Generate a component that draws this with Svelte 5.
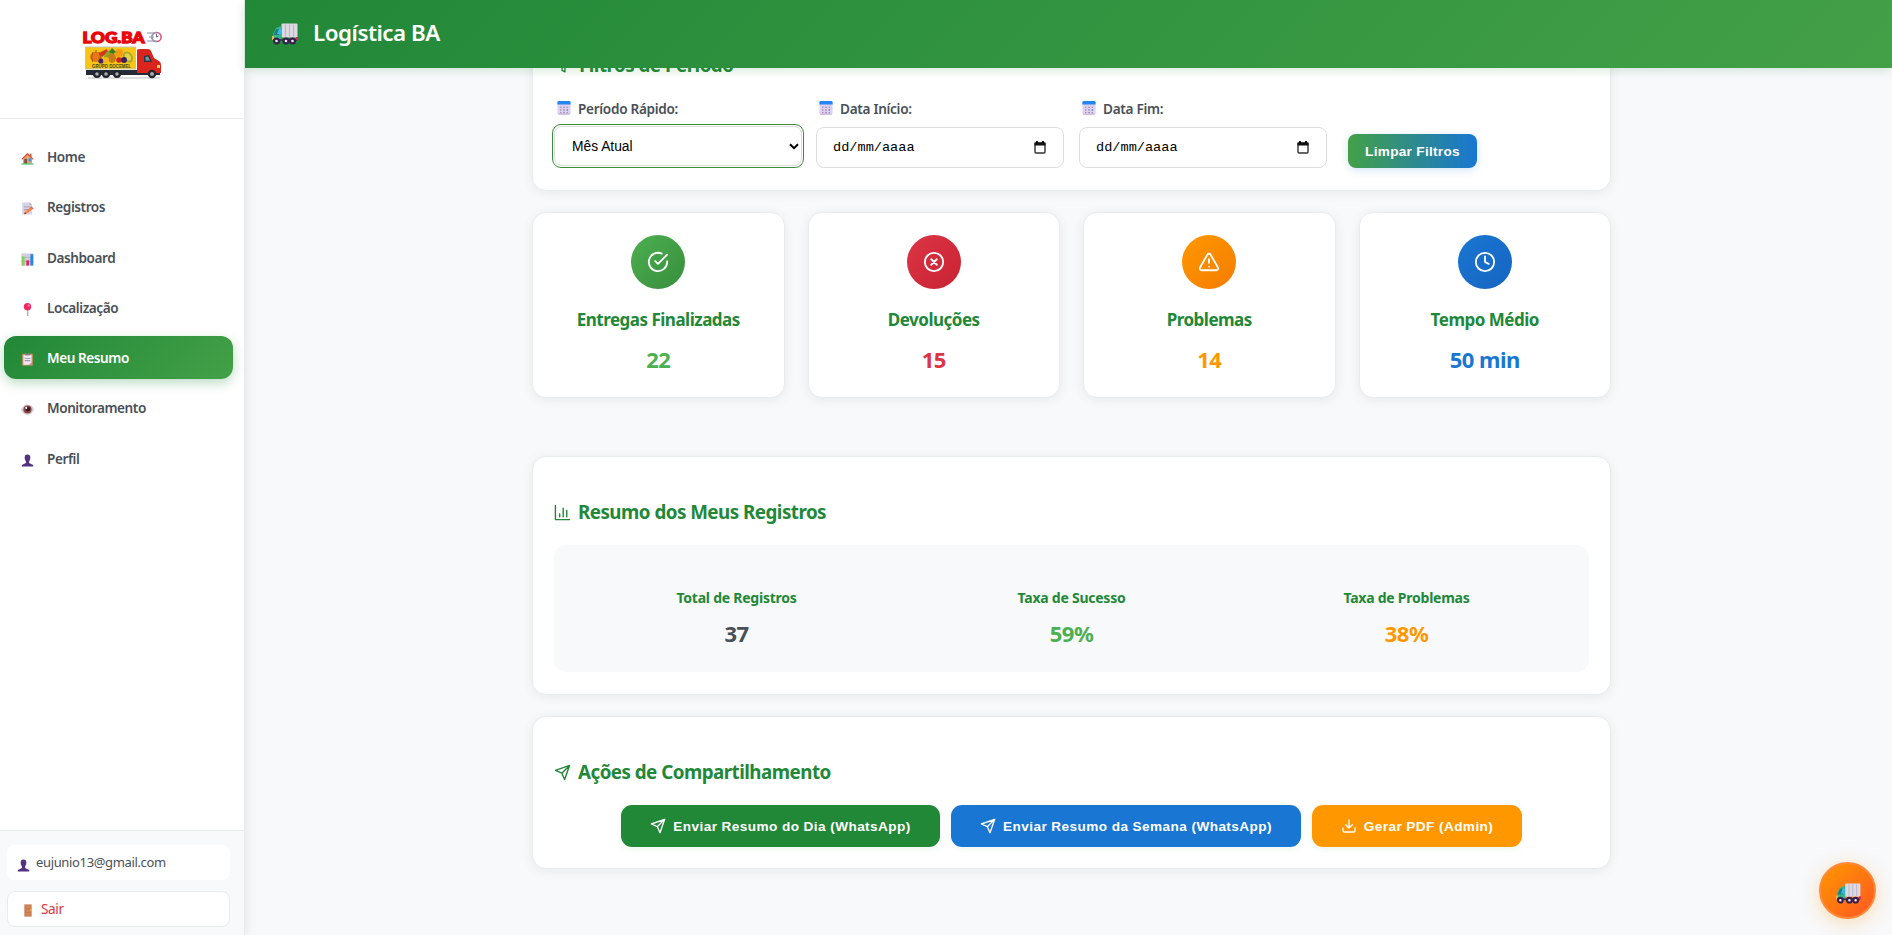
<script>
  const nav = [
    { icon: 'home', label: 'Home' },
    { icon: 'note', label: 'Registros' },
    { icon: 'chart', label: 'Dashboard' },
    { icon: 'pin', label: 'Localização' },
    { icon: 'clipboard', label: 'Meu Resumo', active: true },
    { icon: 'eye', label: 'Monitoramento' },
    { icon: 'user', label: 'Perfil' }
  ];
  const stats = [
    { kind: 'ok', title: 'Entregas Finalizadas', value: '22' },
    { kind: 'bad', title: 'Devoluções', value: '15' },
    { kind: 'warn', title: 'Problemas', value: '14' },
    { kind: 'time', title: 'Tempo Médio', value: '50 min' }
  ];
  const summary = [
    { title: 'Total de Registros', value: '37', kind: 'plain' },
    { title: 'Taxa de Sucesso', value: '59%', kind: 'ok' },
    { title: 'Taxa de Problemas', value: '38%', kind: 'warn' }
  ];
</script>

{#snippet emoji(name)}
  <svg class="emoji" viewBox="0 0 32 32" aria-hidden="true">
    {#if name === 'home'}
      <path d="M5 15 16 5l11 10v14H5z" fill="#e3a46f" />
      <path d="M22 4h4v8h-4z" fill="#b96c50" />
      <path d="M1 17 16 2l15 15-2 2L16 7 3 19z" fill="#dc5038" />
      <path d="M8 17h7v12H8z" fill="#81504e" />
      <path d="M19 16h6v7h-6z" fill="#219bf2" />
      <path d="M1 28h30v3H1z" fill="#3ec76b" />
    {:else if name === 'note'}
      <path d="M3 1h18l6 6v24H3z" fill="#d9d2e3" />
      <path d="m21 1 6 6h-6z" fill="#aaa0b8" />
      <path d="M7 11h16v2H7zm0 7h14v2H7z" fill="#968da5" />
      <path d="m9 25 14-12 5 5-13 10-6 2z" fill="#fb823f" />
      <path d="m23 13 3-2 5 5-3 2z" fill="#f8484d" />
      <path d="m9 25 4 3-5 2z" fill="#493b49" />
    {:else if name === 'chart'}
      <path d="M1 1h30v30H1z" fill="#d4cfdf" />
      <path d="M1 11h30M1 21h30" stroke="#a99fba" stroke-width="1.5" />
      <path d="M2 8h7v23H2z" fill="#87cf63" />
      <path d="M13 18h7v13h-7z" fill="#df256d" />
      <path d="M23 3h7v28h-7z" fill="#2489de" />
    {:else if name === 'pin'}
      <path d="M15 15h3v17h-3z" fill="#aaa2b3" />
      <circle cx="16" cy="9" r="9" fill="#ee2863" />
      <circle cx="19" cy="6" r="2.5" fill="#ff91b1" />
    {:else if name === 'clipboard'}
      <path d="M3 2h26v29H3z" fill="#dc8e5f" />
      <path d="M6 5h20v19l-6 5H6z" fill="#eee8f4" />
      <path d="M26 23v6h-6z" fill="#b99baa" />
      <path d="M10 1h12v5H10z" fill="#827a8c" />
      <path d="M9 12h14v2H9zm0 6h14v2H9z" fill="#8d8498" />
    {:else if name === 'eye'}
      <path d="M0 16Q8 3 18 4q11 1 14 12-6 13-16 13Q4 28 0 16" fill="#d3c9d6" />
      <circle cx="16" cy="16" r="10" fill="#8b4a3f" />
      <circle cx="17" cy="15" r="6" fill="#35152a" />
      <circle cx="13" cy="12" r="2.5" fill="#fff" />
    {:else if name === 'user'}
      <path d="M9 9q0-8 7-8t7 8q0 5-3 9v4l10 5v4H2v-4l10-5v-4Q9 14 9 9" fill="#533282" />
    {:else if name === 'door'}
      <path d="M7 1h18v30H7z" fill="#c77b50" />
      <path d="M10 4h12v6H10zm0 9h12v6H10zm0 9h12v6H10z" fill="#d18859" />
      <circle cx="23" cy="15" r="2" fill="#ffc14c" />
    {:else if name === 'calendar'}
      <rect x="1" y="3" width="30" height="28" rx="3" fill="#ded0ee" />
      <path d="M1 8V3q0-3 3-3h24q3 0 3 3v5z" fill="#2485f4" />
      <path d="M3 29h26v2H3z" fill="#bea5d8" />
      <g fill="#a294b2">
        <path d="M7 13h3v3H7zm7 0h4v3h-4zm8 0h3v3h-3zM7 19h3v3H7zm7 0h4v3h-4zM7 25h3v3H7zm7 0h4v3h-4zm8 0h3v3h-3z" />
      </g>
      <path d="M22 19h3v3h-3z" fill="#318be5" />
    {/if}
  </svg>
{/snippet}

{#snippet truck()}
  <svg class="truck" viewBox="0 0 27 22" aria-hidden="true">
    <rect x="10.5" y=".5" width="16" height="14" rx="1" fill="#ddd9e3" />
    <path d="M14.5 1.5v12m4-12v12m4-12v12" stroke="#bbb4c5" />
    <path d="m10 3-5 2-3 6v6h8.500V3z" fill="#35b68b" />
    <path d="M5 6h3v6H2.500z" fill="#237b86" />
    <path d="M8 6h2v5H6z" fill="#31bdee" />
    <path d="M1 13h2v4H1z" fill="#f5b544" />
    <path d="M2 16h24v2H2z" fill="#48345a" />
    <path d="M25 14h2v3h-2z" fill="#e01e62" />
    <g fill="#f6f0fa" stroke="#34204b" stroke-width="2.200">
      <circle cx="5.500" cy="18" r="2.400" /><circle cx="15" cy="18" r="2.400" /><circle cx="21.500" cy="18" r="2.400" />
    </g>
  </svg>
{/snippet}

{#snippet line(name)}
  <svg class="line" viewBox="0 0 24 24" aria-hidden="true">
    {#if name === 'ok'}
      <path d="M22 11.080V12a10 10 0 1 1-5.930-9.140" /><path d="M22 4 12 14.010l-3-3" />
    {:else if name === 'bad'}
      <circle cx="12" cy="12" r="10" /><path d="m15 9-6 6m0-6 6 6" />
    {:else if name === 'warn'}
      <path d="m21.730 18-8-14a2 2 0 0 0-3.480 0l-8 14A2 2 0 0 0 4 21h16a2 2 0 0 0 1.730-3M12 9v4m0 4h.01" />
    {:else if name === 'time'}
      <circle cx="12" cy="12" r="10" /><path d="M12 6v6l4 2" />
    {:else if name === 'bars'}
      <path d="M2 2v20h20M8 18v-4m5 4V6m5 12V9" />
    {:else if name === 'send'}
      <path d="m22 2-7 20-4-9-9-4zM22 2 11 13" />
    {:else if name === 'filter'}
      <path d="M22 3H2l8 9.460V19l4 2v-8.540z" />
    {:else if name === 'download'}
      <path d="M21 15v4a2 2 0 0 1-2 2H5a2 2 0 0 1-2-2v-4m4-5 5 5 5-5m-5 5V3" />
    {/if}
  </svg>
{/snippet}

{#snippet dateField(label)}
  <div class="field">
    <div class="label">{@render emoji('calendar')}{label}</div>
    <div class="control date">
      <span>dd/mm/aaaa</span>
      <svg viewBox="0 0 12 13" aria-hidden="true">
        <rect x="1" y="2" width="10" height="10" rx="1" fill="none" stroke="#333" stroke-width="1.400" />
        <path d="M.5 1.500h11V4.500H.5zM2 0h2v2H2zm6 0h2v2H8z" fill="#111" />
      </svg>
    </div>
  </div>
{/snippet}

<div class="app">
  <aside>
    <div class="brand">
      <svg viewBox="-2 -8 86 65" aria-label="LOG.BA">
        <text x="0.5" y="11.500" class="wordmark" textLength="62" lengthAdjust="spacingAndGlyphs">LOG.BA</text>
        <g fill="none" stroke="#8d8aa8" stroke-width="1">
          <path d="M65 2h8m-6 4h5m-7 4h8" />
          <circle cx="74.500" cy="6" r="4.600" stroke="#e05078" stroke-width="1.500" />
          <path d="M74.500 1.400a4.600 4.600 0 0 0 0 9.200" stroke="#8aa4c8" stroke-width="1.500" />
          <path d="M74.500 6V3m0 3 2-1" stroke="#6a6890" />
        </g>
        <path d="M6 47h72" stroke="#d4d4d4" stroke-width="1.500" />
        <path d="M4 39h50l24 1v4H4z" fill="#252c38" />
        <path d="M55 19q1-1 3-1h8q2 0 3 2l3 7 5 3q2 1 2 4v8H55z" fill="#d9251e" />
        <path d="m62 25 5-1 3 7h-8z" fill="#293646" />
        <path d="m63.500 26 2.500-.5 2 4h-4.500z" fill="#7e929d" />
        <path d="M75 34h3v3h-3z" fill="#ffd24a" />
        <rect x="3.500" y="16" width="50" height="22" fill="#f6c516" stroke="#c9c4a5" />
        <g>
          <ellipse cx="14" cy="26" rx="6" ry="5" fill="#e87718" />
          <path d="M11 21q-3 5 0 10m6-10q3 5 0 10M14 19v3" fill="none" stroke="#a54e12" />
          <path d="m17 22 8-4 1 3-6 5z" fill="#d63422" />
          <path d="M22 29q-1-7 6-10 3 5 0 11z" fill="#83a82a" />
          <circle cx="37" cy="22" r="4" fill="#f49b13" />
          <ellipse cx="30" cy="27" rx="4" ry="5" fill="#c67c12" />
          <path d="m27 21 3-4 4 4-3 2z" fill="#397c28" />
          <ellipse cx="46" cy="26" rx="4.500" ry="6" fill="#a9a92b" transform="rotate(-35 46 26)" />
          <ellipse cx="46" cy="26" rx="2.500" ry="4" fill="#e4d348" transform="rotate(-35 46 26)" />
          <circle cx="19" cy="30" r="2.600" fill="#3f2467" />
          <circle cx="24" cy="29" r="3" fill="#f3b414" />
          <circle cx="37" cy="29" r="2.800" fill="#cb251f" />
          <circle cx="42" cy="29" r="3" fill="#38235c" />
        </g>
        <text x="10" y="37" class="slogan" textLength="39" lengthAdjust="spacingAndGlyphs">GRUPO DOCEMEL</text>
        <g fill="#aaa" stroke="#20242b" stroke-width="2.200">
          <circle cx="15" cy="43" r="2.900" /><circle cx="24" cy="43" r="2.900" /><circle cx="35" cy="43" r="2.900" /><circle cx="70" cy="43" r="3.100" />
        </g>
      </svg>
    </div>
    <nav>
      {#each nav as item}
        <div class="nav-item" class:active={item.active}>{@render emoji(item.icon)}<span>{item.label}</span></div>
      {/each}
    </nav>
    <div class="account">
      <div class="email">{@render emoji('user')}<span>eujunio13@gmail.com</span></div>
      <div class="logout">{@render emoji('door')}<span>Sair</span></div>
    </div>
  </aside>

  <div class="page">
    <header>{@render truck()}<h1>Logística BA</h1></header>
    <main>
      <section class="card filters">
        <h2>{@render line('filter')}Filtros de Período</h2>
        <div class="fields">
          <div class="field quick">
            <div class="label">{@render emoji('calendar')}Período Rápido:</div>
            <div class="select-ring">
              <div class="control">
                <span>Mês Atual</span>
                <svg viewBox="0 0 10 7" aria-hidden="true"><path d="m1 1.200 4 4 4-4" fill="none" stroke="#000" stroke-width="2" /></svg>
              </div>
            </div>
          </div>
          {@render dateField('Data Início:')}
          {@render dateField('Data Fim:')}
          <button class="clear">Limpar Filtros</button>
        </div>
      </section>

      <div class="stats">
        {#each stats as s}
          <section class="card stat">
            <div class="badge {s.kind}">{@render line(s.kind)}</div>
            <h3>{s.title}</h3>
            <strong class="value {s.kind}-text">{s.value}</strong>
          </section>
        {/each}
      </div>

      <section class="card overview">
        <h2>{@render line('bars')}Resumo dos Meus Registros</h2>
        <div class="rates">
          {#each summary as r}
            <div class="rate">
              <h4>{r.title}</h4>
              <strong class="value {r.kind}-text">{r.value}</strong>
            </div>
          {/each}
        </div>
      </section>

      <section class="card share">
        <h2>{@render line('send')}Ações de Compartilhamento</h2>
        <div class="actions">
          <button class="day">{@render line('send')}Enviar Resumo do Dia (WhatsApp)</button>
          <button class="week">{@render line('send')}Enviar Resumo da Semana (WhatsApp)</button>
          <button class="pdf">{@render line('download')}Gerar PDF (Admin)</button>
        </div>
      </section>
    </main>
  </div>
  <div class="fab">{@render truck()}</div>
</div>

<style>
  :global(body) { margin: 0; overflow: hidden; }
  * { box-sizing: border-box; }
  .app {
    display: grid;
    grid-template-columns: 245px 1fr;
    height: 100vh;
    background: #f8f9fb;
    color: #495057;
    font-family: "Noto Sans", sans-serif;
    overflow: hidden;
  }
  svg { display: block; flex: none; }
  h1, h2, h3, h4 { margin: 0; }

  aside {
    display: flex;
    flex-direction: column;
    background: #fff;
    border-right: 1px solid #e9ecef;
    box-shadow: 2px 0 10px rgba(0, 0, 0, .08);
    z-index: 1;
  }
  .brand { height: 119px; padding: 23px 0 0 80px; border-bottom: 1px solid #e9ecef; }
  .brand svg { width: 86px; height: 65px; overflow: visible; }
  .wordmark { font: 900 15px "Lato", sans-serif; fill: #e8080c; stroke: #e8080c; stroke-width: 1.3; }
  .slogan { font: 700 5.500px "Liberation Sans", sans-serif; fill: #3b4a16; }
  nav { flex: 1; display: flex; flex-direction: column; gap: 7.300px; padding: 16px 11px 0 4px; }
  .nav-item {
    display: flex;
    align-items: center;
    gap: 13px;
    height: 43px;
    padding-left: 17px;
    border-radius: 12px;
    font-size: 13.6px;
    font-weight: 600;
    letter-spacing: -.44px;
  }
  .nav-item .emoji { width: 13px; height: 13px; margin-top: 4px; }
  .nav-item.active {
    color: #fff;
    background: linear-gradient(135deg, #218838, #43a047);
    box-shadow: 0 4px 12px rgba(33, 136, 56, .3);
  }
  .account {
    display: flex;
    flex-direction: column;
    gap: 11px;
    height: 105px;
    padding: 14px 14px 0 7px;
    border-top: 1px solid #e9ecef;
    background: #f8f9fb;
  }
  .email, .logout { display: flex; align-items: center; border-radius: 8px; background: #fff; }
  .email { height: 35px; gap: 6px; padding: 0 0 2px 10px; font-size: 13px; letter-spacing: -.35px; }
  .email .emoji { width: 13px; height: 13px; margin-top: 8px; }
  .logout { height: 36px; gap: 6px; padding: 0 0 1px 13px; border: 1px solid #e9ecef; color: #dc3545; font-size: 13.6px; letter-spacing: -.4px; }
  .logout .emoji { width: 14px; height: 13px; margin-top: 4px; }

  .page { display: flex; flex-direction: column; min-width: 0; height: 100vh; }
  header {
    display: flex;
    flex: none;
    align-items: center;
    gap: 15px;
    height: 68px;
    padding-left: 26px;
    background: linear-gradient(135deg, #218838, #43a047);
    box-shadow: 0 2px 10px rgba(33, 136, 56, .2);
    color: #fff;
    z-index: 2;
  }
  header .truck { width: 27px; height: 22px; }
  h1 { padding-bottom: 2px; font-size: 22.4px; line-height: 30px; font-weight: 600; letter-spacing: -.5px; }
  main { width: 1079px; margin: -43px 0 0 287px; }

  .card {
    border: 1px solid #e9ecef;
    border-radius: 14px;
    background: #fff;
    box-shadow: 0 2px 12px rgba(0, 0, 0, .07);
  }
  h2 {
    display: flex;
    align-items: center;
    gap: 7px;
    color: #218838;
    font-size: 18.8px;
    line-height: 26px;
    font-weight: 700;
    letter-spacing: -.53px;
  }
  .line { width: 17px; height: 17px; fill: none; stroke: currentColor; stroke-width: 2; stroke-linecap: round; stroke-linejoin: round; }

  .filters { height: 166px; padding: 26px 20px 0 19px; }
  .filters h2 { padding-left: 3px; }
  .fields { display: flex; align-items: flex-end; height: 90px; }
  .field { width: 248px; margin-left: 15px; }
  .quick { width: 252px; margin: 0 -3px 0 0; }
  .label {
    display: flex;
    align-items: center;
    gap: 7px;
    height: 20px;
    margin-bottom: 9px;
    padding-left: 3px;
    font-size: 13.6px;
    font-weight: 600;
    letter-spacing: -.3px;
  }
  .quick .label { margin-bottom: 6px; padding-left: 5px; }
  .label .emoji { width: 14px; height: 14px; }
  .control { display: flex; align-items: center; justify-content: space-between; border: 1px solid #ddd; border-radius: 8px; background: #fff; color: #000; }
  .date { height: 41px; padding: 0 17px 0 16px; font: 13.6px "Liberation Mono", monospace; }
  .date svg { width: 12px; height: 13px; }
  .select-ring { height: 44px; padding: 1px; border: 1.5px solid #388e3c; border-radius: 9px; }
  .select-ring .control { height: 40px; padding: 0 2px 0 17px; font: 13.8px "Liberation Sans", sans-serif; }
  .select-ring svg { width: 10px; height: 7px; }

  button {
    display: flex;
    align-items: center;
    justify-content: center;
    gap: 7px;
    padding: 0;
    border: 0;
    color: #fff;
    font: 700 13.6px "Liberation Sans", sans-serif;
    letter-spacing: .42px;
  }
  .clear {
    width: 129px;
    height: 34px;
    margin-left: 21px;
    border-radius: 8px;
    background: linear-gradient(90deg, #43a047, #1976d2);
    box-shadow: 0 2px 8px rgba(25, 118, 210, .2);
    letter-spacing: .3px;
  }

  .stats { display: grid; grid-template-columns: repeat(4, 1fr); gap: 23px; margin: 21px 0 59px; }
  .stat { display: flex; flex-direction: column; align-items: center; height: 186px; padding-top: 22px; }
  .badge { display: grid; place-items: center; width: 54px; height: 54px; border-radius: 50%; color: #fff; }
  .badge .line { width: 22px; height: 22px; }
  .ok { background: linear-gradient(135deg, #4caf50, #388e3c); }
  .bad { background: linear-gradient(135deg, #dc3545, #c82333); }
  .warn { background: linear-gradient(135deg, #ff9800, #f57c00); }
  .time { background: linear-gradient(135deg, #1976d2, #1565c0); }
  h3 { margin-top: 19px; color: #218838; font-size: 17px; line-height: 24px; font-weight: 700; letter-spacing: -.5px; }
  .value { font-size: 22px; line-height: 30px; font-weight: 700; letter-spacing: -.5px; }
  .stat .value { margin-top: 12px; }
  .ok-text { color: #4caf50; }
  .bad-text { color: #dc3545; }
  .warn-text { color: #ff9800; }
  .time-text { color: #1976d2; }
  .plain-text { color: #495057; }

  .overview { height: 239px; margin-top: -1px; padding: 42px 21px 0; }
  .rates { display: grid; grid-template-columns: repeat(3, 1fr); height: 127px; margin-top: 20px; padding: 0 15px; border-radius: 12px; background: #f8f9fb; }
  .rate { display: flex; flex-direction: column; align-items: center; padding-top: 43px; }
  h4 { color: #218838; font-size: 14px; line-height: 20px; font-weight: 700; letter-spacing: -.24px; }
  .rate .value { margin-top: 10px; }

  .share { height: 153px; margin-top: 21px; padding: 42px 21px 0; }
  .actions { display: flex; justify-content: center; gap: 11px; margin-top: 20px; }
  .actions button { height: 42px; border-radius: 11px; box-shadow: 0 2px 8px rgba(33, 136, 56, .08); }
  .actions .line { width: 16px; height: 16px; }
  .day { width: 319px; background: #218838; }
  .week { width: 350px; background: #1976d2; }
  .pdf { width: 210px; background: #ff9800; }

  .fab {
    position: absolute;
    right: 16px;
    bottom: 16px;
    z-index: 3;
    display: grid;
    place-items: center;
    width: 57px;
    height: 57px;
    border: 2px solid #ff8a3a;
    border-radius: 50%;
    background: linear-gradient(135deg, #ff9800, #ff5722);
    box-shadow: 0 4px 20px rgba(255, 152, 0, .3);
  }
  .fab .truck { width: 26px; height: 21px; margin-top: 5px; }
</style>
